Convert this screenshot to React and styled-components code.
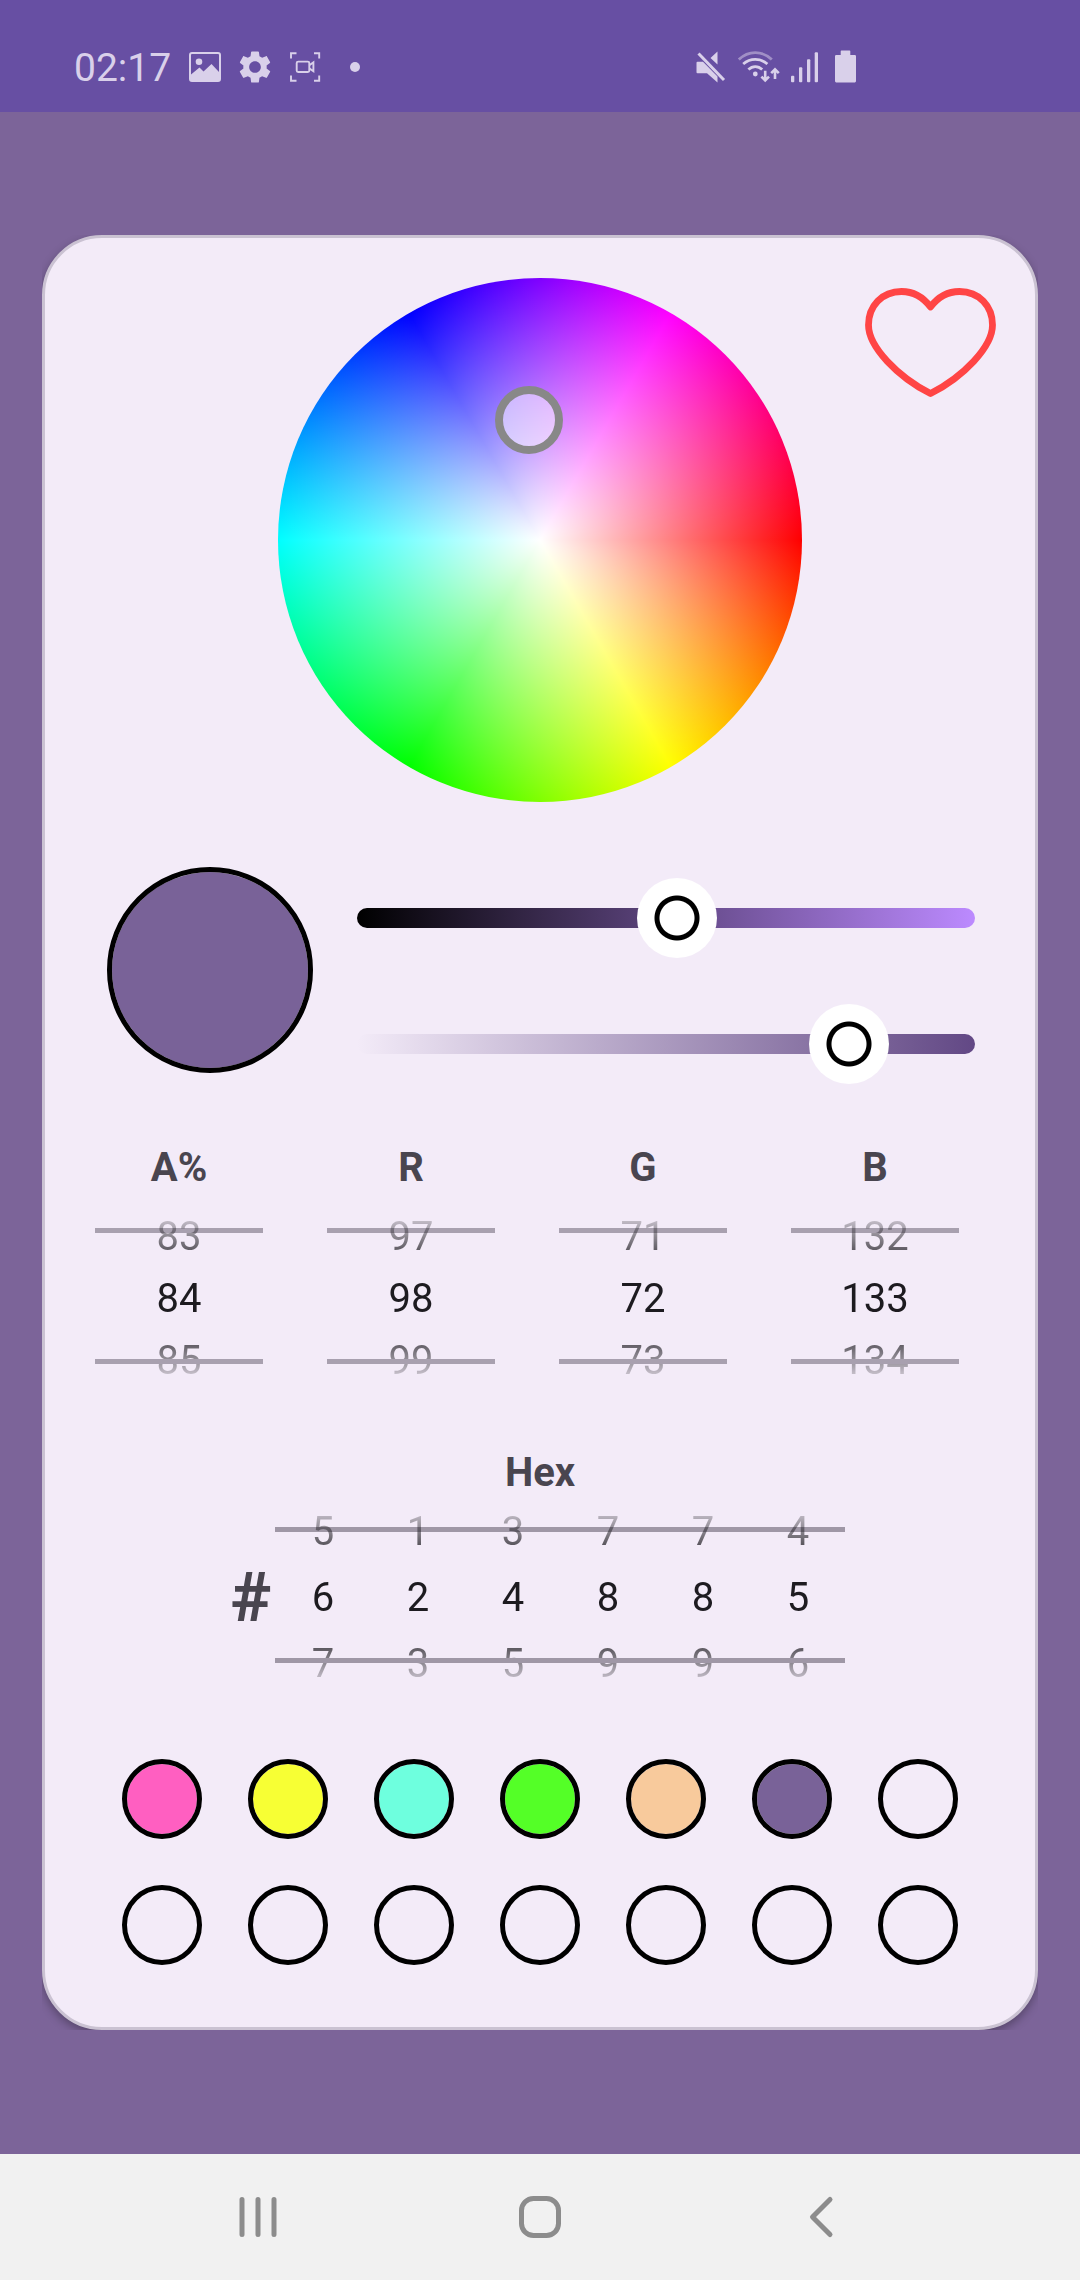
import React, { useState } from "react";
import styled, { createGlobalStyle } from "styled-components";

const GlobalStyle = createGlobalStyle`
  *, *::before, *::after { box-sizing: border-box; }
  body { margin: 0; font-family: Roboto, "Noto Sans", sans-serif; }
  button, input { font: inherit; color: inherit; }
  button { background: none; border: 0; padding: 0; cursor: pointer; }
`;

const picked = "rgba(98, 72, 133, 0.84)";

const Screen = styled.div`
  display: flex;
  flex-direction: column;
  min-height: 100vh;
  background: #7c6499;
  color: #1d1b20;
`;

const StatusBar = styled.header`
  display: flex;
  align-items: center;
  justify-content: space-between;
  height: 112px;
  padding: 24px 222px 0 74px;
  background: #674fa3;
  color: #d9d0ea;
`;

const StatusGroup = styled.div`
  display: flex;
  align-items: center;
  gap: ${(p) => p.$gap}px;
`;

const Clock = styled.time`
  font-size: 39px;
  line-height: 44px;
`;

const Main = styled.main`
  flex: 1;
  padding: 123px 42px 124px;
`;

const CardClip = styled.div`
  overflow: hidden;
`;

const Card = styled.section`
  border: 3px solid #cac2d2;
  border-radius: 60px;
  background: #f3ebf8;
  padding: 40px 0 62px;
  box-shadow: 0 4px 10px rgba(0, 0, 0, 0.3);
`;

const WheelRow = styled.div`
  display: grid;
  grid-template-columns: 1fr 524px 1fr;
  align-items: start;
  padding: 0 35px;
`;

const ColorWheel = styled.div`
  grid-column: 2;
  position: relative;
  aspect-ratio: 1;
  border-radius: 50%;
  background:
    radial-gradient(closest-side, #fff, rgba(255, 255, 255, 0)),
    conic-gradient(from 90deg, #f00, #ff0, #0f0, #0ff, #00f, #f0f, #f00);
`;

const WheelHandle = styled.button`
  position: absolute;
  left: 217px;
  top: 108px;
  width: 68px;
  height: 68px;
  border: 8px solid #888;
  border-radius: 50%;
  background: rgba(255, 255, 255, 0.5);
`;

const FavoriteButton = styled.button`
  justify-self: end;
  line-height: 0;
`;

const PreviewRow = styled.div`
  display: flex;
  align-items: flex-start;
  gap: 44px;
  margin-top: 65px;
  padding: 0 60px 0 62px;
`;

const Preview = styled.div`
  flex: none;
  width: 206px;
  height: 206px;
  border: 5px solid #000;
  border-radius: 50%;
  background: ${picked};
  background-clip: padding-box;
`;

const Sliders = styled.div`
  flex: 1;
  display: flex;
  flex-direction: column;
  gap: 46px;
  padding-top: 11px;
`;

const Slider = styled.input.attrs({ type: "range", min: 0, max: 100 })`
  appearance: none;
  width: 100%;
  height: 80px;
  margin: 0;
  background: none;

  &::-webkit-slider-runnable-track {
    height: 20px;
    border-radius: 10px;
    background: linear-gradient(to right, ${(p) => p.$from}, ${(p) => p.$to});
  }

  &::-webkit-slider-thumb {
    appearance: none;
    width: 80px;
    height: 80px;
    margin-top: -30px;
    border-radius: 50%;
    background: radial-gradient(circle, #fff 17px, #000 18px, #000 22px, #fff 23px);
  }
`;

const Channels = styled.div`
  display: grid;
  grid-template-columns: repeat(4, 1fr);
  gap: 64px;
  margin-top: 62px;
  padding: 0 76px 0 50px;
`;

const Channel = styled.div`
  display: flex;
  flex-direction: column;
  gap: 16px;
`;

const labelText = `
  display: block;
  padding: 0;
  font-size: 40px;
  line-height: 44px;
  font-weight: 700;
  text-align: center;
  color: #49454f;
`;

const ChannelLabel = styled.label`
  ${labelText}
`;

const HexTitle = styled.h2`
  ${labelText}
  margin: 0;
`;

const Window = styled.div`
  position: relative;
  display: flex;

  &::before,
  &::after {
    content: "";
    position: absolute;
    left: 0;
    right: 0;
    top: ${(p) => p.$line}px;
    height: 5px;
    background: ${(p) => p.$tone};
  }

  &::after {
    top: ${(p) => p.$line + 131}px;
  }
`;

const Reel = styled.div`
  flex: 1;
  min-width: 0;
  display: flex;
  flex-direction: column;
  font-size: 40px;
  mask-image: linear-gradient(
    transparent,
    #000 64px,
    #000 calc(100% - 68px),
    transparent calc(100% - 4px)
  );

  button,
  input {
    width: 100%;
    height: ${(p) => p.$row}px;
    line-height: ${(p) => p.$row}px;
    padding: 0;
    border: 0;
    background: none;
    text-align: center;
  }
`;

const HexSection = styled.section`
  display: flex;
  flex-direction: column;
  gap: 4px;
  margin-top: 59px;
`;

const HexRow = styled.div`
  display: flex;
  justify-content: center;
  align-items: center;
  padding-right: 4px;
`;

const Hash = styled.span`
  padding-right: 4px;
  font-size: 69px;
  line-height: 80px;
  font-weight: 700;
  color: #49454f;
`;

const HexDigit = styled.div`
  display: flex;
  width: 95px;
`;

const Swatches = styled.div`
  display: grid;
  grid-template-columns: repeat(7, 80px);
  gap: 46px;
  justify-content: center;
  margin-top: 62px;
`;

const Swatch = styled.button`
  height: 80px;
  border: 5px solid #000;
  border-radius: 50%;
  background: ${(p) => p.$color} padding-box;
`;

const NavBar = styled.nav`
  display: grid;
  grid-template-columns: repeat(3, 1fr);
  height: 126px;
  padding: 0 117px;
  background: #f1f1f1;
  color: #8c8c8c;
`;

const NavButton = styled.button`
  display: flex;
  align-items: center;
  justify-content: center;
`;

const StatusSvg = ({ w, children, viewBox }) => (
  <svg width={w} height="36" viewBox={viewBox || `0 0 ${w} 36`} fill="currentColor" aria-hidden="true">
    {children}
  </svg>
);

const NavSvg = ({ children }) => (
  <svg
    width="48"
    height="48"
    viewBox="0 0 48 48"
    fill="none"
    stroke="currentColor"
    strokeWidth="5"
    strokeLinecap="round"
    strokeLinejoin="round"
    aria-hidden="true"
  >
    {children}
  </svg>
);

function LeftIcons() {
  return (
    <>
      <StatusSvg w={32}>
        <rect x="1" y="3" width="30" height="28" rx="2" fill="none" stroke="currentColor" strokeWidth="2" />
        <circle cx="10" cy="11.7" r="3.3" />
        <path d="M2 24.5 10.5 17.5 14.5 21.5 22.5 14 30 22V30H2Z" />
      </StatusSvg>
      <StatusSvg w={32} viewBox="2.15 1.54 19.7 22.15">
        <path d="M19.14 12.94c.04-.3.06-.61.06-.94 0-.32-.02-.64-.07-.94l2.03-1.58c.18-.14.23-.41.12-.61l-1.92-3.32c-.12-.22-.37-.29-.59-.22l-2.39.96c-.5-.38-1.03-.7-1.62-.94l-.36-2.54c-.04-.24-.24-.41-.48-.41h-3.84c-.24 0-.43.17-.47.41l-.36 2.54c-.59.24-1.13.57-1.62.94l-2.39-.96c-.22-.08-.47 0-.59.22L2.74 8.87c-.12.21-.08.47.12.61l2.03 1.58c-.05.3-.09.63-.09.94s.02.64.07.94l-2.03 1.58c-.18.14-.23.41-.12.61l1.92 3.32c.12.22.37.29.59.22l2.39-.96c.5.38 1.03.7 1.62.94l.36 2.54c.05.24.24.41.48.41h3.84c.24 0 .44-.17.47-.41l.36-2.54c.59-.24 1.13-.56 1.62-.94l2.39.96c.22.08.47 0 .59-.22l1.92-3.32c.12-.22.07-.47-.12-.61zM12 15.6c-1.98 0-3.6-1.62-3.6-3.6s1.62-3.6 3.6-3.6 3.6 1.62 3.6 3.6-1.62 3.6-3.6 3.6" />
      </StatusSvg>
      <StatusSvg w={32}>
        <g fill="none" stroke="currentColor" strokeWidth="1.9">
          <path d="M2 8.5V3.2H7.5M25 3.2H30.2V8.5M30.2 25.5V30.8H25M7.5 30.8H2V25.5" />
          <rect x="7.7" y="11.6" width="12.6" height="10.4" rx="1.5" />
          <path d="M20.3 15.2 24.4 12.4V21.2L20.3 18.4" />
        </g>
      </StatusSvg>
      <StatusSvg w={32}>
        <circle cx="16" cy="17" r="5" />
      </StatusSvg>
    </>
  );
}

function RightIcons() {
  return (
    <>
      <StatusSvg w={34}>
        <path d="M3.5 11.7H9L23.5 26.5V32.5L13 23.3H3.5Q2.5 23.3 2.5 22.3V12.7Q2.5 11.7 3.5 11.7ZM16.5 8 23.5 1.5V14.5Z" />
        <path d="M4.5 3.5 30 30" stroke="currentColor" strokeWidth="3" />
      </StatusSvg>
      <StatusSvg w={44}>
        <g fill="none" stroke="currentColor" strokeWidth="2.8">
          <path d="M1.800 9.600Q9 2.600 18.300 2.600T34.800 9.600" opacity="0.5" />
          <path d="M6.200 14Q11.500 9.400 18.300 9.400T30.400 14" />
          <path d="M11.400 19.600Q14.500 16.600 18.300 16.600T25.200 19.600" />
        </g>
        <circle cx="18.3" cy="24" r="2.4" />
        <g fill="none" stroke="currentColor" strokeWidth="2.6">
          <path d="M28.2 20.8V30M24.4 26.6 28.2 30.4 32 26.6" />
          <path d="M38 29V19.6M34.2 23.2 38 19.4 41.8 23.2" />
        </g>
      </StatusSvg>
      <StatusSvg w={35}>
        <rect x="1" y="25.7" width="3.3" height="6.5" rx="1" />
        <rect x="9" y="17.3" width="3.3" height="14.9" rx="1" />
        <rect x="17" y="9.3" width="3.3" height="22.9" rx="1" />
        <rect x="24.7" y="2.3" width="3.3" height="29.9" rx="1" />
      </StatusSvg>
      <StatusSvg w={24}>
        <path d="M7.4.5H15.6Q16.3.5 16.3 1.2V5H20.8Q22 5 22 6.2V31Q22 32.4 20.8 32.4H2.2Q1 32.4 1 31V6.2Q1 5 2.2 5H6.7V1.2Q6.7.5 7.4.5Z" />
      </StatusSvg>
    </>
  );
}

function NumberReel({ id, name, value, row, format, onChange, wrap }) {
  const at = (n) => (wrap ? (n + wrap) % wrap : n);
  const show = format || String;
  return (
    <Reel $row={row}>
      <button type="button" onClick={() => onChange(at(value - 1))}>
        {show(at(value - 1))}
      </button>
      <input id={id} aria-label={name} value={show(value)} readOnly />
      <button type="button" onClick={() => onChange(at(value + 1))}>
        {show(at(value + 1))}
      </button>
    </Reel>
  );
}

const swatchColors = ["#ff5fc1", "#f7ff34", "#6effde", "#54ff27", "#f8ca9c", picked];

export default function App() {
  const [channels, setChannels] = useState([
    ["A%", 84],
    ["R", 98],
    ["G", 72],
    ["B", 133],
  ]);
  const [hex, setHex] = useState([6, 2, 4, 8, 8, 5]);

  return (
    <Screen>
      <GlobalStyle />
      <StatusBar>
        <StatusGroup $gap={18}>
          <Clock>02:17</Clock>
          <LeftIcons />
        </StatusGroup>
        <StatusGroup $gap={9}>
          <RightIcons />
        </StatusGroup>
      </StatusBar>

      <Main>
        <CardClip>
          <Card>
            <WheelRow>
              <ColorWheel>
                <WheelHandle type="button" aria-label="Hue and saturation" />
              </ColorWheel>
              <FavoriteButton type="button" aria-label="Favorite">
                <svg width="140" height="122" viewBox="0 0 140 122" fill="none" stroke="#ff4545" strokeWidth="6.8" strokeLinejoin="round">
                  <path d="M70.5 29C63 19 53 13.5 41.5 13.5 22 13.5 8.5 28 8.5 47 8.5 69 38 99 70.5 115.5 103 99 132.500 69 132.500 47 132.500 28 119 13.5 99.500 13.500 88 13.500 78 19 70.500 29Z" />
                </svg>
              </FavoriteButton>
            </WheelRow>

            <PreviewRow>
              <Preview />
              <Sliders>
                <Slider aria-label="Brightness" defaultValue={52} $from="#000" $to="#bc8aff" />
                <Slider aria-label="Opacity" defaultValue={84} $from="rgba(98, 72, 133, 0)" $to="#624885" />
              </Sliders>
            </PreviewRow>

            <Channels>
              {channels.map(([name, value], i) => (
                <Channel key={name}>
                  <ChannelLabel htmlFor={`channel-${i}`}>{name}</ChannelLabel>
                  <Window $line={22} $tone="#a8a0af">
                    <NumberReel
                      id={`channel-${i}`}
                      value={value}
                      row={62}
                      onChange={(n) => setChannels(channels.map((c, j) => (j === i ? [name, n] : c)))}
                    />
                  </Window>
                </Channel>
              ))}
            </Channels>

            <HexSection>
              <HexTitle>Hex</HexTitle>
              <HexRow>
                <Hash>#</Hash>
                <Window $line={28} $tone="#9f97a6">
                  {hex.map((digit, i) => (
                    <HexDigit key={i}>
                      <NumberReel
                        name={`Hex digit ${i + 1}`}
                        value={digit}
                        row={66}
                        wrap={16}
                        format={(n) => n.toString(16).toUpperCase()}
                        onChange={(n) => setHex(hex.map((d, j) => (j === i ? n : d)))}
                      />
                    </HexDigit>
                  ))}
                </Window>
              </HexRow>
            </HexSection>

            <Swatches>
              {Array.from({ length: 14 }, (_, i) => (
                <Swatch key={i} type="button" aria-label={`Saved color ${i + 1}`} $color={swatchColors[i] || "transparent"} />
              ))}
            </Swatches>
          </Card>
        </CardClip>
      </Main>

      <NavBar>
        <NavButton type="button" aria-label="Recent apps">
          <NavSvg>
            <path d="M8 6.5V41.5M24 6.5V41.5M40 6.5V41.5" />
          </NavSvg>
        </NavButton>
        <NavButton type="button" aria-label="Home">
          <NavSvg>
            <rect x="5.5" y="5.5" width="37" height="37" rx="12" />
          </NavSvg>
        </NavButton>
        <NavButton type="button" aria-label="Back">
          <NavSvg>
            <path d="M32 6.5 14.5 24 32 41.5" />
          </NavSvg>
        </NavButton>
      </NavBar>
    </Screen>
  );
}
